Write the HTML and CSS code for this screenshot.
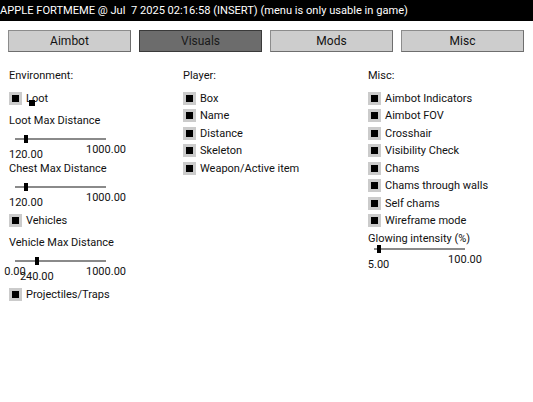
FILE: index.html
```html
<!DOCTYPE html>
<html lang="en">
<head>
  <meta charset="UTF-8" />
  <title>APPLE FORTMEME</title>
  <link rel="stylesheet" href="styles.css">
</head>
<body>
  <div class="topbar">APPLE FORTMEME @ Jul  7 2025 02:16:58 (INSERT) (menu is only usable in game)</div>

  <div class="tabs">
    <button class="tab">Aimbot</button>
    <button class="tab active">Visuals</button>
    <button class="tab">Mods</button>
    <button class="tab">Misc</button>
  </div>

  <div class="columns">
    <div class="col">
      <div class="title">Environment:</div>
      <div class="check"><span class="box"></span>Loot</div>
      <div class="range-block">
        <div class="range-label">Loot Max Distance</div>
        <div class="slider">
          <div class="track"></div>
          <div class="thumb" style="left: 12%"></div>
          <div class="val" style="left: 12%">120.00</div>
          <div class="max">1000.00</div>
        </div>
      </div>
      <div class="range-block">
        <div class="range-label">Chest Max Distance</div>
        <div class="slider">
          <div class="track"></div>
          <div class="thumb" style="left: 12%"></div>
          <div class="val" style="left: 12%">120.00</div>
          <div class="max">1000.00</div>
        </div>
      </div>
      <div class="check"><span class="box"></span>Vehicles</div>
      <div class="range-block">
        <div class="range-label">Vehicle Max Distance</div>
        <div class="slider">
          <div class="track"></div>
          <div class="thumb" style="left: 24%"></div>
          <div class="min">0.00</div>
          <div class="val" style="left: 24%">240.00</div>
          <div class="max">1000.00</div>
        </div>
      </div>
      <div class="check"><span class="box"></span>Projectiles/Traps</div>
    </div>

    <div class="col">
      <div class="title">Player:</div>
      <div class="check"><span class="box"></span>Box</div>
      <div class="check"><span class="box"></span>Name</div>
      <div class="check"><span class="box"></span>Distance</div>
      <div class="check"><span class="box"></span>Skeleton</div>
      <div class="check"><span class="box"></span>Weapon/Active item</div>
    </div>

    <div class="col">
      <div class="title">Misc:</div>
      <div class="check"><span class="box"></span>Aimbot Indicators</div>
      <div class="check"><span class="box"></span>Aimbot FOV</div>
      <div class="check"><span class="box"></span>Crosshair</div>
      <div class="check"><span class="box"></span>Visibility Check</div>
      <div class="check"><span class="box"></span>Chams</div>
      <div class="check"><span class="box"></span>Chams through walls</div>
      <div class="check"><span class="box"></span>Self chams</div>
      <div class="check"><span class="box"></span>Wireframe mode</div>
      <div class="range-block compact">
        <div class="range-label">Glowing intensity (%)</div>
        <div class="slider">
          <div class="track"></div>
          <div class="thumb" style="left: 5%"></div>
          <div class="val" style="left: 5%">5.00</div>
          <div class="max">100.00</div>
        </div>
      </div>
    </div>
  </div>

  <div class="cursor"></div>
</body>
</html>
```

FILE: styles.css
```css
body {
  margin: 0;
  font-family: Roboto, "Noto Sans", sans-serif;
  font-size: 11px;
  color: #111;
  background: #fff;
  position: relative;
  height: 402px;
  overflow: hidden;
}

.topbar {
  height: 21px;
  line-height: 22px;
  background: #000;
  color: #fff;
  font-size: 11.1px;
  white-space: pre;
}

.tabs {
  display: flex;
  gap: 8px;
  margin: 9px 9px 0 8px;
}

.tab {
  flex: 1;
  height: 22px;
  padding: 0;
  font-family: inherit;
  font-size: 12px;
  color: #111;
  background: #cdcdcd;
  border: 1px solid #8c8c8c;
  border-right-color: #6e6e6e;
  border-bottom-color: #6e6e6e;
}

.tab.active {
  background: #6c6c6c;
  border-color: #3a3a3a;
  color: #1a1a1a;
}

.columns {
  display: grid;
  grid-template-columns: 174px 185px 1fr;
  padding-left: 9px;
  margin-top: 18px;
}

.col {
  display: flex;
  flex-direction: column;
}

.title {
  line-height: 12px;
  margin-bottom: 9.5px;
}

.check {
  display: flex;
  align-items: center;
  gap: 4px;
  height: 13px;
  line-height: 13px;
  margin-bottom: 4.5px;
}

.box {
  width: 13px;
  height: 13px;
  background: #cbcbcb;
  display: flex;
  align-items: center;
  justify-content: center;
}

.box::after {
  content: "";
  width: 7px;
  height: 7px;
  background: #000;
}

.check + .range-block {
  margin-top: 4.5px;
}

.range-block + .check {
  margin-top: 4px;
}

.range-label {
  line-height: 13px;
}

.slider {
  position: relative;
  width: 91px;
  height: 26.5px;
  margin: 8.5px 0 0 6px;
}

.compact {
  margin-top: 0 !important;
}

.compact .slider {
  margin-top: 0;
}

.track {
  position: absolute;
  top: 3px;
  left: 0;
  right: 0;
  height: 2px;
  background: #8a8a8a;
}

.thumb {
  position: absolute;
  top: 0;
  width: 4px;
  height: 8px;
  margin-left: -2px;
  background: #000;
}

.val,
.min,
.max {
  position: absolute;
  line-height: 12px;
  transform: translateX(-50%);
  white-space: nowrap;
}

.val {
  top: 14px;
}

.min {
  left: 0;
  top: 9px;
}

.max {
  left: 100%;
  top: 9px;
}

.cursor {
  position: absolute;
  left: 29px;
  top: 100px;
  width: 6px;
  height: 6px;
  background: #000;
}
```
